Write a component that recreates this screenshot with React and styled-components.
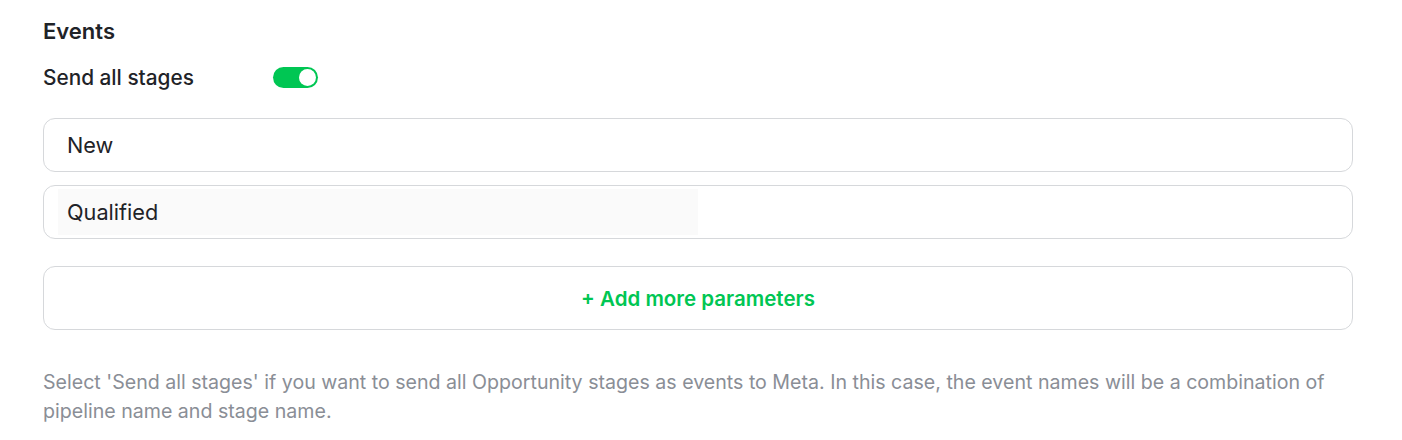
import React, { useState } from 'react';
import styled, { createGlobalStyle } from 'styled-components';

const GlobalStyle = createGlobalStyle`
  html, body {
    margin: 0;
    padding: 0;
    background: #ffffff;
  }
  body {
    font-family: Inter, "Noto Sans", sans-serif;
    color: #1f2328;
  }
`;

const Section = styled.section`
  padding: 18px 49px 0 43px;
  display: flex;
  flex-direction: column;
`;

const Title = styled.h2`
  margin: 0;
  font-size: 22px;
  font-weight: 600;
  line-height: 26px;
  color: #1f2328;
`;

const ToggleRow = styled.div`
  display: flex;
  align-items: center;
  margin-top: 20px;
  height: 26px;
`;

const ToggleLabel = styled.span`
  width: 230px;
  font-size: 20.8px;
  font-weight: 500;
  color: #1f2328;
`;

const Switch = styled.button`
  width: 45px;
  height: 21px;
  border: none;
  padding: 0;
  border-radius: 11px;
  background: ${(p) => (p.$on ? '#00c653' : '#d0d4d9')};
  position: relative;
  cursor: pointer;

  &::after {
    content: '';
    position: absolute;
    top: 2px;
    left: ${(p) => (p.$on ? '26px' : '2px')};
    width: 17px;
    height: 17px;
    border-radius: 50%;
    background: #ffffff;
  }
`;

const Stages = styled.div`
  display: flex;
  flex-direction: column;
  gap: 13px;
  margin-top: 28px;
`;

const StageField = styled.div`
  height: 54px;
  border: 1px solid #d6d8db;
  border-radius: 12px;
  box-sizing: border-box;
  display: flex;
  align-items: center;
  padding: 0 14px;
`;

const StageName = styled.span`
  display: flex;
  align-items: center;
  box-sizing: border-box;
  height: 46px;
  width: ${(p) => (p.$filled ? '640px' : 'auto')};
  padding-left: 9px;
  background: ${(p) => (p.$filled ? '#fafafa' : 'transparent')};
  font-size: 21.7px;
  color: #1f2328;
`;

const AddButton = styled.button`
  margin-top: 27px;
  height: 64px;
  border: 1px solid #d6d8db;
  border-radius: 12px;
  background: #ffffff;
  color: #00c653;
  font-family: inherit;
  font-size: 20.5px;
  font-weight: 600;
  cursor: pointer;
`;

const Help = styled.p`
  margin: 38px 0 0;
  font-size: 19.6px;
  line-height: 29px;
  color: #8a8e96;
  max-width: 1300px;
`;

export default function App() {
  const [on, setOn] = useState(true);
  const stages = [
    { name: 'New', filled: false },
    { name: 'Qualified', filled: true },
  ];

  return (
    <>
      <GlobalStyle />
      <Section>
        <Title>Events</Title>
        <ToggleRow>
          <ToggleLabel>Send all stages</ToggleLabel>
          <Switch $on={on} onClick={() => setOn(!on)} aria-label="Send all stages" />
        </ToggleRow>
        <Stages>
          {stages.map((s) => (
            <StageField key={s.name}>
              <StageName $filled={s.filled}>{s.name}</StageName>
            </StageField>
          ))}
        </Stages>
        <AddButton>+ Add more parameters</AddButton>
        <Help>
          Select 'Send all stages' if you want to send all Opportunity stages as events to Meta. In this case, the event
          names will be a combination of pipeline name and stage name.
        </Help>
      </Section>
    </>
  );
}
